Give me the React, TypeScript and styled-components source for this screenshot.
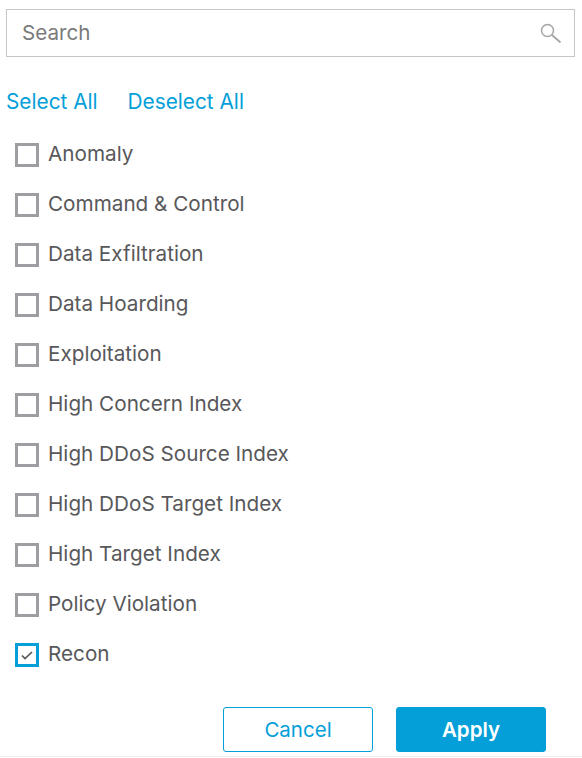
import styled, { createGlobalStyle } from "styled-components";

const GlobalStyle = createGlobalStyle`
  html, body {
    margin: 0;
    padding: 0;
    background: #fff;
    font-family: Inter, "Liberation Sans", sans-serif;
  }
`;

const Panel = styled.div`
  width: 582px;
  height: 758px;
  box-sizing: border-box;
  padding: 9px 7px 0 6px;
  display: flex;
  flex-direction: column;
  overflow: hidden;
`;

const SearchBox = styled.div`
  height: 48px;
  box-sizing: border-box;
  border: 1px solid #c6c6c6;
  display: flex;
  align-items: center;
  justify-content: space-between;
  padding: 0 12px 0 15px;
`;

const SearchInput = styled.input`
  border: none;
  outline: none;
  flex: 1;
  font: 400 20.6px Inter, "Liberation Sans", sans-serif;
  color: #6f6f6f;
  padding: 0 0 2px;
  &::placeholder {
    color: #7a7a7a;
    opacity: 1;
  }
`;

const LinkRow = styled.div`
  display: flex;
  gap: 30px;
  margin-top: 32px;
  height: 26px;
  align-items: center;
`;

const TextLink = styled.a`
  color: #049fd9;
  font-size: 20.8px;
  line-height: 26px;
  cursor: pointer;
`;

const List = styled.ul`
  list-style: none;
  margin: 15px 0 0;
  padding: 0 0 0 9px;
  display: flex;
  flex-direction: column;
`;

const Row = styled.li`
  height: 50px;
  display: flex;
  align-items: center;
  gap: 9px;
`;

const Box = styled.span<{ $checked?: boolean }>`
  width: 24px;
  height: 24px;
  box-sizing: border-box;
  border: 3px solid ${(p) => (p.$checked ? "#049fd9" : "#9e9ea2")};
  display: flex;
  align-items: center;
  justify-content: center;
`;

const Label = styled.span`
  color: #58585b;
  font-size: 20.7px;
  line-height: 26px;
  padding-bottom: 2px;
`;

const Footer = styled.div`
  display: flex;
  gap: 23px;
  margin-top: 27px;
  padding-left: 217px;
`;

const Button = styled.button<{ $primary?: boolean }>`
  width: 150px;
  height: 45px;
  box-sizing: border-box;
  border: 1px solid #049fd9;
  border-radius: 3px;
  background: ${(p) => (p.$primary ? "#049fd9" : "#fff")};
  color: ${(p) => (p.$primary ? "#fff" : "#049fd9")};
  font: ${(p) => (p.$primary ? 600 : 400)} 20.5px Inter, "Liberation Sans", sans-serif;
  padding: 0;
`;

const BottomLine = styled.div`
  height: 1px;
  background: #eeeeee;
  margin: 4px -7px 0 -6px;
`;

const items = [
  "Anomaly",
  "Command & Control",
  "Data Exfiltration",
  "Data Hoarding",
  "Exploitation",
  "High Concern Index",
  "High DDoS Source Index",
  "High DDoS Target Index",
  "High Target Index",
  "Policy Violation",
  "Recon",
];

export default function App() {
  return (
    <>
      <GlobalStyle />
      <Panel>
        <SearchBox>
          <SearchInput placeholder="Search" />
          <svg width="22" height="22" viewBox="0 0 22 22" fill="none" stroke="#a5a5a5" strokeWidth="1.5">
            <circle cx="7.5" cy="8.5" r="6" />
            <path d="M12 13 20.5 20.5" strokeWidth="1.8" />
          </svg>
        </SearchBox>
        <LinkRow>
          <TextLink>Select All</TextLink>
          <TextLink>Deselect All</TextLink>
        </LinkRow>
        <List>
          {items.map((item) => (
            <Row key={item}>
              <Box $checked={item === "Recon"}>
                {item === "Recon" && (
                  <svg width="12" height="9" viewBox="0 0 12 9" fill="none" stroke="#58585b" strokeWidth="1.7">
                    <path d="M1 4.5 4 7.5 11 1" />
                  </svg>
                )}
              </Box>
              <Label>{item}</Label>
            </Row>
          ))}
        </List>
        <Footer>
          <Button>Cancel</Button>
          <Button $primary>Apply</Button>
        </Footer>
        <BottomLine />
      </Panel>
    </>
  );
}
